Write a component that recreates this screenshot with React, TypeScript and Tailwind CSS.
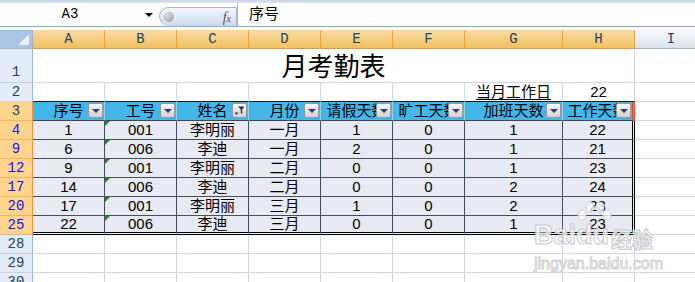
import React from 'react';

const widths = ['w-[72px]', 'w-[72px]', 'w-[72px]', 'w-[72px]', 'w-[72px]', 'w-[72px]', 'w-[98px]', 'w-[72px]'];
const letters = ['A', 'B', 'C', 'D', 'E', 'F', 'G', 'H'];

const headers = [
  { label: '序号' },
  { label: '工号' },
  { label: '姓名', filtered: true },
  { label: '月份' },
  { label: '请假天数' },
  { label: '旷工天数' },
  { label: '加班天数' },
  { label: '工作天数' },
];

const rows = [
  { n: 4, cells: ['1', '001', '李明丽', '一月', '1', '0', '1', '22'] },
  { n: 9, cells: ['6', '006', '李迪', '一月', '2', '0', '1', '21'] },
  { n: 12, cells: ['9', '001', '李明丽', '二月', '0', '0', '1', '23'] },
  { n: 17, cells: ['14', '006', '李迪', '二月', '0', '0', '2', '24'] },
  { n: 20, cells: ['17', '001', '李明丽', '三月', '1', '0', '2', '23'] },
  { n: 25, cells: ['22', '006', '李迪', '三月', '0', '0', '1', '23'] },
];

const sans = "font-['Liberation_Sans','Noto_Sans_CJK_SC',sans-serif]";
const mono = "font-['Liberation_Mono','Noto_Sans_CJK_SC',monospace]";

type HeadState = 'plain' | 'sel' | 'filt';

const RowHead = ({ n, state, bottom }: { n: number; state: HeadState; bottom?: boolean }) => (
  <div
    className={`w-[33px] shrink-0 h-full flex justify-center border-r border-b text-[14px] leading-none ${mono} ${
      bottom ? 'items-end pb-[3px]' : 'items-center'
    } ${
      state === 'plain'
        ? 'bg-[#e4ecf7] border-r-[#9eb6ce] border-b-[#c5d3e3] text-[#27415f]'
        : state === 'sel'
        ? 'bg-[#ffd58e] border-r-[#f29436] border-b-[#f5b660] text-[#27415f]'
        : 'bg-[#ffd58e] border-r-[#f29436] border-b-[#f5b660] text-[#1010ff]'
    }`}
  >
    {n}
  </div>
);

const DropBtn = ({ filtered }: { filtered?: boolean }) => (
  <div className="absolute right-[1px] top-[1px] w-[15px] h-[15px] rounded-[2px] border border-[#9a9a9a] bg-gradient-to-b from-[#f7f7f7] to-[#d2d2d2] flex items-center justify-center">
    {filtered ? (
      <svg width="11" height="11" viewBox="0 0 11 11">
        <path d="M4 1.5h6.5L8.2 4.5v4.5l-1.4-1V4.5z" fill="#2f2f2f" />
        <path d="M0.5 7.5h4l-2 2.5z" fill="#2c3e73" />
      </svg>
    ) : (
      <div className="w-0 h-0 border-l-[4px] border-r-[4px] border-t-[4px] border-l-transparent border-r-transparent border-t-[#2c3e73] mt-[1px]" />
    )}
  </div>
);

const GridCell = ({ w, children, dark }: { w: string; children?: React.ReactNode; dark?: boolean }) => (
  <div
    className={`${w} shrink-0 h-full flex items-center justify-center border-r border-b border-r-[#d0d7e5] ${
      dark ? 'border-b-[#1c1c1c]' : 'border-b-[#d0d7e5]'
    }`}
  >
    {children}
  </div>
);

export default function App() {
  return (
    <div className={`relative w-[695px] h-[282px] overflow-hidden bg-white text-black ${sans}`}>
      {/* ribbon edge + formula bar */}
      <div className="h-[3px] bg-gradient-to-b from-[#c6d6ec] to-[#dde7f4]" />
      <div className="h-[24px] flex border-b border-[#8fa6c2] bg-white">
        <div className="w-[159px] shrink-0 flex items-center">
          <span className={`w-[140px] text-center text-[14px] ${mono}`}>A3</span>
          <div className="ml-[5px] w-0 h-0 border-l-[4px] border-r-[4px] border-t-[4px] border-l-transparent border-r-transparent border-t-black" />
        </div>
        <div className="self-end h-[19px] w-[78px] shrink-0 rounded-l-full border border-b-0 border-[#a7b9d1] bg-gradient-to-b from-[#f6f9fd] to-[#c9d8ec] flex items-center">
          <div className="ml-[4px] w-[10px] h-[10px] rounded-full bg-gradient-to-br from-[#f2f2f2] to-[#9c9c9c] border border-[#b5b5b5]" />
          <span className="ml-auto mr-[5px] italic text-[#555] font-['Liberation_Serif',serif] leading-none">
            <span className="text-[14px]">f</span>
            <span className="text-[10px]">x</span>
          </span>
        </div>
        <div className="flex-1 flex items-center pl-[11px] text-[15px] border-l border-[#a7b9d1]">序号</div>
      </div>
      <div className="h-[3px] bg-white" />

      {/* column headers */}
      <div className="flex h-[19px]">
        <div className="w-[33px] shrink-0 relative bg-[#a9c4e8] border-r border-b border-[#9eb6ce]">
          <div className="absolute right-[3px] bottom-[3px] w-0 h-0 border-l-[11px] border-l-transparent border-b-[11px] border-b-[#eef3fa]" />
        </div>
        {letters.map((l, i) => (
          <div
            key={l}
            className={`${widths[i]} shrink-0 h-full flex items-center justify-center bg-gradient-to-b from-[#f9dca5] to-[#f1c15e] border-r border-b border-r-[#f0a748] border-b-[#f29436] text-[14px] text-[#27415f] ${mono}`}
          >
            {l}
          </div>
        ))}
        <div className={`w-[72px] shrink-0 h-full flex items-center justify-center bg-gradient-to-b from-[#f6f8fb] to-[#dbe2ec] border-b border-[#9eb6ce] text-[14px] text-[#27415f] ${mono}`}>
          I
        </div>
      </div>

      {/* row 1: title */}
      <div className="flex h-[34px]">
        <RowHead n={1} state="plain" bottom />
        <div className="w-[602px] shrink-0 h-full flex items-end justify-center pb-[2px] border-r border-b border-[#d0d7e5] text-[26px] leading-none">
          月考勤表
        </div>
        <GridCell w="w-[72px]" />
      </div>

      {/* row 2 */}
      <div className="flex h-[19px] text-[15px]">
        <RowHead n={2} state="plain" />
        {widths.map((w, i) => (
          <GridCell key={i} w={w} dark>
            {i === 6 ? <span className="underline underline-offset-[2px]">当月工作日</span> : i === 7 ? '22' : null}
          </GridCell>
        ))}
        <GridCell w="w-[72px]" />
      </div>

      {/* row 3: table header */}
      <div className="flex h-[19px] text-[15px]">
        <RowHead n={3} state="sel" />
        {headers.map((h, i) => (
          <div
            key={h.label}
            className={`${widths[i]} shrink-0 relative h-full flex items-center justify-center overflow-hidden bg-[#45b6e9] border-b border-b-[#3c4654] ${
              i === 7 ? 'border-r-[3px] border-double border-r-[#d94a2a]' : 'border-r border-r-[#8fd3f2]'
            }`}
          >
            <span className="whitespace-nowrap">{h.label}</span>
            <DropBtn filtered={h.filtered} />
          </div>
        ))}
        <GridCell w="w-[72px]" />
      </div>

      {/* data rows */}
      {rows.map((r, ri) => {
        const last = ri === rows.length - 1;
        return (
          <div key={r.n} className="flex h-[19px] text-[15px]">
            <RowHead n={r.n} state="filt" />
            {r.cells.map((c, i) => (
              <div
                key={i}
                className={`${widths[i]} shrink-0 relative h-full flex items-center justify-center bg-[#e8eaf4] ${
                  last ? 'border-b-[3px] border-double border-b-black' : 'border-b border-b-[#464e5b]'
                } ${i === 7 ? 'border-r-[3px] border-double border-r-black' : 'border-r border-r-[#464e5b]'}`}
              >
                {i === 1 && (
                  <div className="absolute left-0 top-0 w-0 h-0 border-t-[5px] border-r-[5px] border-t-[#1e8a1e] border-r-transparent" />
                )}
                {c}
              </div>
            ))}
            <GridCell w="w-[72px]" />
          </div>
        );
      })}

      {/* empty rows */}
      {[28, 29, 30].map((n) => (
        <div key={n} className="flex h-[19px]">
          <RowHead n={n} state="plain" />
          {widths.map((w, i) => (
            <GridCell key={i} w={w} />
          ))}
          <GridCell w="w-[72px]" />
        </div>
      ))}

      {/* watermark */}
      <div className="absolute left-[534px] top-[198px] pointer-events-none select-none">
        <svg width="40" height="30" viewBox="0 0 40 30" className="absolute left-[40px] top-[2px]" fill="rgba(255,255,255,0.75)" stroke="#cfcfcf" strokeWidth="1">
          <ellipse cx="8" cy="15" rx="4" ry="5" />
          <ellipse cx="16" cy="7" rx="4" ry="5" />
          <ellipse cx="26" cy="7" rx="4" ry="5" />
          <ellipse cx="33" cy="15" rx="4" ry="5" />
        </svg>
        <div className="flex items-end mt-[24px] leading-none">
          <span className="text-[27px] font-bold text-white/80 [-webkit-text-stroke:1px_#c9c9c9] font-['Liberation_Sans',sans-serif]">Baidu</span>
          <span className="ml-[2px] text-[21px] font-bold text-white/80 [-webkit-text-stroke:1px_#c9c9c9] font-['Noto_Sans_CJK_SC',sans-serif]">经验</span>
        </div>
        <div className="mt-[7px] text-[16px] leading-none text-white/80 [-webkit-text-stroke:1px_#d2d2d2] font-['Liberation_Sans',sans-serif]">
          jingyan.baidu.com
        </div>
      </div>
    </div>
  );
}
